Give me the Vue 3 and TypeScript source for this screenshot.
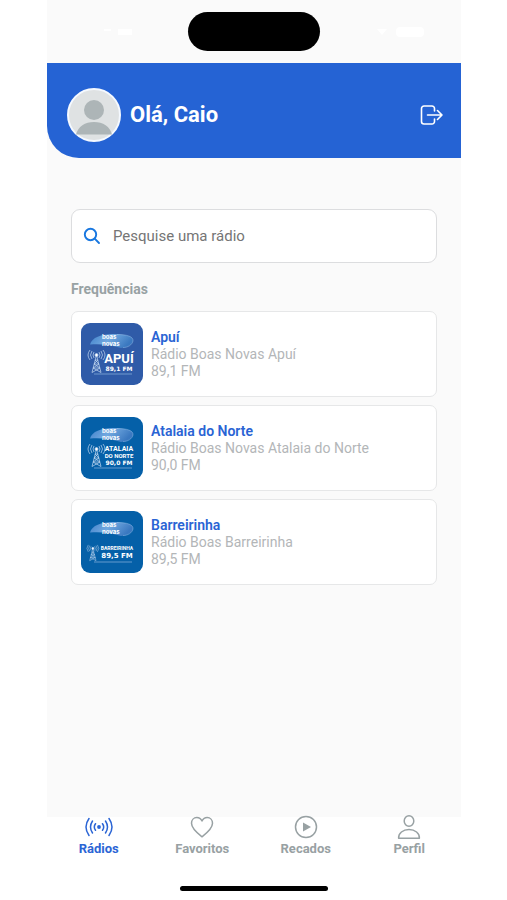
<script setup lang="ts">
import { computed, ref } from 'vue'

interface Station {
  city: string
  name: string
  frequency: string
  color: string
  tower: string
  lines: { text: string; x: number; y: number; size: number; wide?: boolean }[]
}

interface Tab {
  id: string
  label: string
}

const stations: Station[] = [
  {
    city: 'Apuí',
    name: 'Rádio Boas Novas Apuí',
    frequency: '89,1 FM',
    color: '#2f5ba8',
    tower: '',
    lines: [
      { text: 'APUÍ', x: 38, y: 40, size: 13 },
      { text: '89,1 FM', x: 38, y: 48, size: 6, wide: true },
    ],
  },
  {
    city: 'Atalaia do Norte',
    name: 'Rádio Boas Novas Atalaia do Norte',
    frequency: '90,0 FM',
    color: '#0560a8',
    tower: '',
    lines: [
      { text: 'ATALAIA', x: 38, y: 34, size: 7 },
      { text: 'DO NORTE', x: 38, y: 41, size: 6 },
      { text: '90,0 FM', x: 38, y: 48, size: 6, wide: true },
    ],
  },
  {
    city: 'Barreirinha',
    name: 'Rádio Boas Barreirinha',
    frequency: '89,5 FM',
    color: '#0560a8',
    tower: 'translate(1 15) scale(0.7)',
    lines: [
      { text: 'BARREIRINHA', x: 36, y: 39, size: 5 },
      { text: '89,5 FM', x: 36, y: 47, size: 7, wide: true },
    ],
  },
]

const tabs: Tab[] = [
  { id: 'radios', label: 'Rádios' },
  { id: 'favoritos', label: 'Favoritos' },
  { id: 'recados', label: 'Recados' },
  { id: 'perfil', label: 'Perfil' },
]

const query = ref('')
const activeTab = ref('radios')

const visibleStations = computed(() =>
  stations.filter((s) => s.name.toLowerCase().includes(query.value.trim().toLowerCase())),
)
</script>

<template>
  <div class="stage">
    <div class="phone">
      <div class="status">
        <svg class="status-mark" width="50" height="12" viewBox="0 0 50 12" aria-hidden="true">
          <path d="M22 3h7v2h-7zM36 3h14v6H36z" />
        </svg>
        <div class="island"></div>
        <svg class="status-mark" width="50" height="12" viewBox="0 0 50 12" aria-hidden="true">
          <path d="M1 3h10L6 9z" />
          <rect x="20" y="1" width="28" height="10" rx="4" />
        </svg>
      </div>

      <header class="header">
        <svg class="avatar" viewBox="0 0 54 54" aria-hidden="true">
          <circle cx="27" cy="27" r="26" fill="#dfe2e3" stroke="#f5f9ff" stroke-width="2" />
          <circle cx="27" cy="22" r="10" fill="#adb5b7" />
          <path d="M9 46.500c2-8 9-12.500 18-12.500s16 4.500 18 12.500z" fill="#adb5b7" />
        </svg>
        <h1 class="greeting">Olá, Caio</h1>
        <button class="logout" type="button" aria-label="Sair">
          <svg width="24" height="22" viewBox="0 0 24 22" aria-hidden="true">
            <path d="M15.500 7V4.500A2.500 2.500 0 0 0 13 2H5A2.500 2.500 0 0 0 2.500 4.500v13A2.500 2.500 0 0 0 5 20h8a2.500 2.500 0 0 0 2.500-2.500V15M8.500 11H23M18.500 6.500l4.500 4.500-4.500 4.500" />
          </svg>
        </button>
      </header>

      <main class="content">
        <label class="search">
          <svg width="18" height="18" viewBox="0 0 18 18" aria-hidden="true">
            <circle cx="7.500" cy="7.500" r="5.700" />
            <path d="M11.700 11.700l4.300 4.300" />
          </svg>
          <input v-model="query" type="text" placeholder="Pesquise uma rádio" aria-label="Pesquise uma rádio" />
        </label>

        <h2 class="section-title">Frequências</h2>

        <ul class="stations">
          <li v-for="station in visibleStations" :key="station.city">
            <button class="card" type="button">
              <svg class="logo" viewBox="0 0 62 62" aria-hidden="true">
                <defs>
                  <linearGradient id="oval" x1="0" y1="0" x2="1" y2="0.300">
                    <stop offset="0" stop-color="#3f80ca" />
                    <stop offset="0.500" stop-color="#72a9e0" />
                    <stop offset="1" stop-color="#3a78c0" />
                  </linearGradient>
                </defs>
                <rect width="62" height="62" rx="9" :fill="station.color" />
                <path d="M9 21.500c2-7 11-10.500 23-10.500 12 0 21 2 20 7-1 4-6 7-12 7-9-3-20-4.500-31-3.500z" fill="url(#oval)" />
                <path d="M36 11.500c10 0 16.500 2 16 6.500-1 4-5 6.500-10 6.500" fill="none" stroke="#a6caee" stroke-width="0.600" opacity="0.700" />
                <text class="brand" x="21" y="16">boas</text>
                <text class="brand" x="21" y="23">novas</text>
                <g class="tower" :transform="station.tower || undefined">
                  <path d="M15.500 32L11 49.500M15.500 32L20 49.500M14 37h3M13 41h5M12 45h7M14 37l4 4-6 4 8 4.500M17 37l-4 4 6 4-8 4.500" />
                  <path d="M13 29q-2 3 0 6M11 28q-3 4 0 8M9 27q-4 5 0 10M18 29q2 3 0 6M20 28q3 4 0 8M22 27q4 5 0 10" />
                  <circle class="beacon" cx="15.500" cy="32" r="1.500" />
                </g>
                <text
                  v-for="line in station.lines"
                  :key="line.text"
                  class="logo-text"
                  :class="{ wide: line.wide }"
                  :x="line.x"
                  :y="line.y"
                  :font-size="line.size"
                >{{ line.text }}</text>
                <path d="M13 51h38" stroke="#8db5df" stroke-width="0.700" />
              </svg>
              <span class="details">
                <span class="city">{{ station.city }}</span>
                <span>{{ station.name }}</span>
                <span>{{ station.frequency }}</span>
              </span>
            </button>
          </li>
        </ul>
      </main>

      <nav class="tabs">
        <button
          v-for="tab in tabs"
          :key="tab.id"
          class="tab"
          :class="{ active: tab.id === activeTab }"
          type="button"
          @click="activeTab = tab.id"
        >
          <svg v-if="tab.id === 'radios'" width="28" height="24" viewBox="0 0 28 24" aria-hidden="true">
            <circle cx="14" cy="12" r="1.900" class="solid" />
            <path d="M10.500 8.700q-2.400 3.300 0 6.600M17.500 8.700q2.400 3.300 0 6.600M7.500 6q-4 6 0 12M20.500 6q4 6 0 12M4 3.500q-6 8.500 0 17M24 3.500q6 8.500 0 17" />
          </svg>
          <svg v-else-if="tab.id === 'favoritos'" width="28" height="24" viewBox="0 0 28 24" aria-hidden="true">
            <path d="M14 21.800C9 18 3.500 13.500 3.500 8.300 3.500 5 5.800 2.500 8.800 2.500c2.300 0 4.100 1.200 5.200 3.500 1.100-2.300 2.900-3.500 5.200-3.500 3 0 5.300 2.500 5.300 5.800C24.500 13.500 19 18 14 21.800z" />
          </svg>
          <svg v-else-if="tab.id === 'recados'" width="28" height="24" viewBox="0 0 28 24" aria-hidden="true">
            <circle cx="14" cy="12" r="10.500" />
            <path d="M11 7.500v9l8-4.500z" class="solid" />
          </svg>
          <svg v-else width="28" height="24" viewBox="0 0 28 24" aria-hidden="true">
            <ellipse cx="14" cy="6" rx="4.800" ry="5.200" />
            <path d="M3.600 23.200c-.3-5 4.400-8.700 10.400-8.700s10.700 3.700 10.400 8.700z" />
          </svg>
          <span>{{ tab.label }}</span>
        </button>
        <div class="home-indicator"></div>
      </nav>
    </div>
  </div>
</template>

<style>
body {
  margin: 0;
  background: #ffffff;
}
</style>

<style scoped>
.stage {
  box-sizing: border-box;
  min-height: 100vh;
  padding: 0 46px 0 47px;
  display: flex;
  font-family: Roboto, 'Liberation Sans', sans-serif;
}

.phone {
  flex: 1;
  min-width: 0;
  display: flex;
  flex-direction: column;
  background: #fafafa;
}

button {
  font: inherit;
  border: 0;
  padding: 0;
  background: none;
  cursor: pointer;
}

.status {
  height: 63px;
  display: flex;
  align-items: center;
  justify-content: center;
  gap: 56px;
}

.status-mark {
  fill: #ffffff;
}

.island {
  width: 132px;
  height: 39px;
  border-radius: 20px;
  background: #000000;
}

.header {
  box-sizing: border-box;
  height: 95px;
  padding: 8px 18px 0 20px;
  display: flex;
  align-items: center;
  background: #2563d4;
  border-bottom-left-radius: 32px;
}

.avatar {
  width: 54px;
  height: 54px;
  flex: none;
}

.greeting {
  flex: 1;
  margin: 0 0 0 9px;
  font-size: 22px;
  line-height: 28px;
  font-weight: 700;
  color: #ffffff;
}

.logout svg {
  display: block;
  fill: none;
  stroke: #ffffff;
  stroke-width: 1.600;
  stroke-linecap: round;
  stroke-linejoin: round;
}

.content {
  flex: 1;
  padding: 51px 24px 24px;
}

.search {
  box-sizing: border-box;
  height: 54px;
  padding: 0 11px;
  display: flex;
  align-items: center;
  gap: 12px;
  border: 1px solid #dcdddf;
  border-radius: 9px;
  background: #ffffff;
}

.search svg {
  flex: none;
  fill: none;
  stroke: #1877e0;
  stroke-width: 1.900;
  stroke-linecap: round;
}

.search input {
  flex: 1;
  min-width: 0;
  padding: 0;
  border: 0;
  outline: 0;
  background: none;
  font: inherit;
  font-size: 15px;
  color: #333333;
}

.search input::placeholder {
  color: #757575;
  opacity: 1;
}

.section-title {
  margin: 18px 0 13px;
  font-size: 14px;
  line-height: 17px;
  font-weight: 700;
  color: #98a2a4;
}

.stations {
  margin: 0;
  padding: 0;
  list-style: none;
  display: grid;
  gap: 8px;
}

.card {
  box-sizing: border-box;
  width: 100%;
  height: 86px;
  padding: 0 9px;
  display: flex;
  align-items: center;
  gap: 8px;
  border: 1px solid #e6e7e8;
  border-radius: 7px;
  background: #ffffff;
  text-align: left;
}

.logo {
  width: 62px;
  height: 62px;
  flex: none;
}

.brand {
  font-family: Inter, Roboto, sans-serif;
  font-size: 6px;
  font-weight: 700;
  fill: #ffffff;
}

.tower {
  fill: none;
  stroke: #c3d8f0;
  stroke-width: 0.700;
}

.beacon {
  fill: #ffffff;
}

.logo-text {
  font-family: Roboto, sans-serif;
  font-weight: 700;
  text-anchor: middle;
  fill: #ffffff;
}

.logo-text.wide {
  font-family: 'DejaVu Sans', sans-serif;
}

.details {
  display: flex;
  flex-direction: column;
  font-size: 14px;
  line-height: 17px;
  color: #b3b6b8;
}

.city {
  font-weight: 600;
  color: #2a64d4;
}

.tabs {
  height: 83px;
  display: grid;
  grid-template-columns: repeat(4, 1fr);
  grid-template-rows: 42px 1fr;
  background: #ffffff;
}

.tab {
  display: flex;
  flex-direction: column;
  align-items: center;
  gap: 2px;
  font-size: 13px;
  line-height: 16px;
  font-weight: 700;
  color: #98a1a3;
}

.tab svg {
  flex: none;
  margin-top: -2px;
  fill: none;
  stroke: currentColor;
  stroke-width: 1.500;
  stroke-linecap: round;
  stroke-linejoin: round;
}

.tab .solid {
  fill: currentColor;
  stroke: none;
}

.tab.active {
  color: #2b65d5;
}

.home-indicator {
  grid-column: 1 / -1;
  align-self: end;
  justify-self: center;
  width: 148px;
  height: 5px;
  margin-bottom: 9px;
  border-radius: 3px;
  background: #000000;
}
</style>
